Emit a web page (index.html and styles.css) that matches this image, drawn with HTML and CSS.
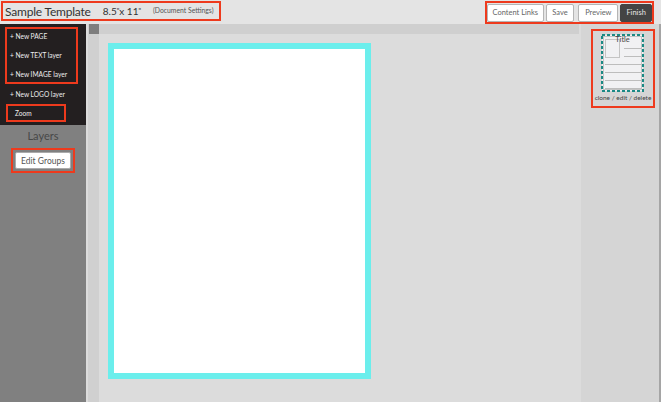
FILE: index.html
```html
<!DOCTYPE html>
<html lang="en">
<head>
<meta charset="utf-8">
<title>Sample Template</title>
<link rel="stylesheet" href="styles.css">
</head>
<body>
<header class="topbar">
  <div class="doc red">
    <span class="doc-name">Sample Template</span>
    <span class="doc-size">8.5<span class="quote">"</span>x 11<span class="quote">"</span></span>
    <span class="doc-settings">(Document Settings)</span>
  </div>
  <div class="actions red">
    <button class="btn btn-links">Content Links</button>
    <button class="btn btn-save">Save</button>
    <button class="btn btn-preview">Preview</button>
    <button class="btn btn-dark">Finish</button>
  </div>
</header>
<div class="main">
  <aside class="sidebar">
    <nav class="menu">
      <div class="menu-group red">
        <div class="menu-item">+ New PAGE</div>
        <div class="menu-item">+ New TEXT layer</div>
        <div class="menu-item">+ New IMAGE layer</div>
      </div>
      <div class="menu-item menu-logo">+ New LOGO layer</div>
      <div class="menu-item menu-zoom red">Zoom</div>
    </nav>
    <div class="layers">
      <h2 class="layers-title">Layers</h2>
      <div class="edit-wrap red"><button class="edit-btn">Edit Groups</button></div>
    </div>
  </aside>
  <section class="workspace">
    <div class="ruler-top"><div class="corner"></div></div>
    <div class="stage">
      <div class="ruler-left"></div>
      <div class="canvas"><div class="page"></div></div>
    </div>
  </section>
  <aside class="pages">
    <div class="thumb-box red">
      <div class="thumb">
        <svg class="thumb-art" viewBox="0 0 43 58" width="43" height="58" aria-hidden="true">
          <rect x="1" y="1" width="41" height="56" fill="#f1f1f3" stroke="#1b8a85" stroke-width="2" stroke-dasharray="3 2"/>
          <rect x="2.500" y="2.500" width="38" height="53" fill="none" stroke="#c4c4c4" stroke-width="1"/>
          <rect x="4.500" y="5.500" width="14" height="18" fill="#f1f1f3" stroke="#c4c4c4" stroke-width="1"/>
          <path d="M23 14.500H40M23 22.500H40M4 30.500H40M4 38.500H40M4 46.500H40M4 54.500H40" stroke="#bdbdbd" stroke-width="1" fill="none"/>
        </svg>
        <span class="thumb-title">Title</span>
      </div>
      <div class="thumb-links">clone / edit / delete</div>
    </div>
  </aside>
</div>
</body>
</html>
```
FILE: styles.css
```css
* { box-sizing: border-box; }
html, body { margin: 0; height: 100%; }
body {
  width: 661px;
  height: 402px;
  overflow: hidden;
  display: flex;
  flex-direction: column;
  background: #dcdcdc;
  font-family: "Lato", "Liberation Sans", sans-serif;
  color: #333;
}
.red { border: 2px solid #ee3a1d; }
.topbar {
  flex: 0 0 24px;
  display: flex;
  justify-content: space-between;
  align-items: flex-start;
  background: #e4e4e4;
  padding: 1px 7px 0 1px;
}
.doc {
  width: 220px;
  height: 20px;
  display: flex;
  align-items: center;
  padding-left: 2px;
  white-space: nowrap;
}
.doc-name { font-size: 12px; letter-spacing: -0.200px; color: #333; }
.doc-size { font-size: 10px; margin-left: 12px; color: #333; }
.quote { font-size: 7px; vertical-align: 1px; }
.doc-settings { font-size: 6.800px; margin-left: 12px; color: #555; position: relative; top: -1px; }
.actions {
  width: 169px;
  height: 23px;
  display: flex;
  align-items: center;
}
.btn {
  height: 18px;
  padding: 0;
  font: 7.500px "Lato", "Liberation Sans", sans-serif;
  color: #666;
  background: #fff;
  border: 1px solid #b5b5b5;
  border-radius: 2px;
  white-space: nowrap;
}
.btn-links { width: 57px; }
.btn-save { width: 29px; margin-left: 2px; }
.btn-preview { width: 40px; margin-left: 4px; }
.btn-dark { width: 32px; margin-left: 2px; background: #444; color: #e4e4e4; border-color: #444; }
.main { flex: 1; display: flex; min-height: 0; }
.sidebar { flex: 0 0 86px; display: flex; flex-direction: column; background: #808080; }
.menu { height: 101px; background: #231f20; padding: 3px 0 0 5px; }
.menu-group { width: 73px; height: 57px; }
.menu-item {
  height: 19px;
  font-size: 6.600px;
  line-height: 15px;
  color: #eee;
  padding-left: 3px;
  white-space: nowrap;
}
.menu-logo { padding-left: 5px; line-height: 20px; }
.menu-zoom { width: 60px; height: 18px; line-height: 15px; padding-left: 7px; margin: 1px 0 0 1px; }
.layers { display: flex; flex-direction: column; align-items: center; }
.layers-title { margin: 4px 0 0; font-size: 11px; line-height: 13px; font-weight: 400; color: #484848; }
.edit-wrap { margin-top: 6px; width: 64px; height: 25px; padding: 2px; }
.edit-btn {
  display: block;
  width: 100%;
  height: 100%;
  font: 8.500px "Lato", "Liberation Sans", sans-serif;
  color: #555;
  background: #fff;
  border: 1px solid #aaa;
  border-radius: 2px;
  padding: 0;
}
.workspace { flex: 1; min-width: 0; display: flex; flex-direction: column; margin-left: 2px; }
.ruler-top { flex: 0 0 10px; background: #cfcfcf; margin-right: 2px; padding-left: 1px; }
.corner { width: 10px; height: 10px; background: #7e7e7e; }
.stage { flex: 1; display: flex; min-height: 0; }
.ruler-left { flex: 0 0 11px; background: #d0d0d0; }
.canvas { flex: 1; padding: 9px 0 0 9px; }
.page {
  width: 263px;
  height: 336px;
  background: #fff;
  border: 6px solid #6beeec;
}
.pages {
  flex: 0 0 80px;
  background: #d5d5d5;
  border-right: 2px solid #a5a5a5;
  padding: 5px 0 0 10px;
}
.thumb-box { width: 64px; height: 79px; padding: 3px 0 0 8px; }
.thumb { position: relative; width: 43px; height: 58px; }
.thumb-art { display: block; }
.thumb-title {
  position: absolute;
  left: 0;
  right: 0;
  top: 1px;
  text-align: center;
  font-size: 7.500px;
  line-height: 10px;
  color: #444;
}
.thumb-links {
  margin: 1px 0 0 -8px;
  width: 60px;
  text-align: center;
  font-size: 6.500px;
  line-height: 9px;
  color: #444;
  white-space: nowrap;
}
```
